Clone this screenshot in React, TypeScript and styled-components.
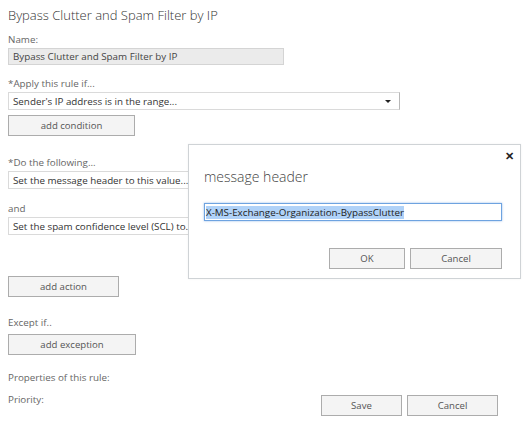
import styled, { createGlobalStyle } from 'styled-components';

const GlobalStyle = createGlobalStyle`
  body {
    margin: 0;
    background: #fff;
    font-family: "Open Sans", "Noto Sans", sans-serif;
    color: #444;
  }
`;

const Page = styled.div`
  position: relative;
  width: 527px;
  height: 434px;
  box-sizing: border-box;
  padding: 5px 8px;
  display: flex;
  flex-direction: column;
  overflow: hidden;
`;

const Title = styled.h1`
  margin: 0;
  height: 20px;
  line-height: 20px;
  font-size: 13px;
  font-weight: 300;
  color: #333;
`;

const Label = styled.div<{ $top: number }>`
  margin-top: ${p => p.$top}px;
  height: 12px;
  line-height: 12px;
  font-size: 9.8px;
  color: #666;
  white-space: nowrap;
`;

const NameBox = styled.div`
  margin-top: 2px;
  width: 276px;
  height: 17px;
  box-sizing: border-box;
  border: 1px solid #d4d4d4;
  background: #ebebeb;
  padding-left: 4px;
  font-size: 9.8px;
  line-height: 15px;
  color: #444;
`;

const Select = styled.div<{ $top: number; $width: number }>`
  margin-top: ${p => p.$top}px;
  width: ${p => p.$width}px;
  height: 18px;
  box-sizing: border-box;
  border: 1px solid #dadada;
  border-right-color: #b8b8b8;
  background: #fff;
  padding: 0 8px 0 4px;
  display: flex;
  align-items: center;
  justify-content: space-between;
  font-size: 9.8px;
  color: #333;
  white-space: nowrap;
  overflow: hidden;
`;

const Caret = styled.span`
  width: 0;
  height: 0;
  border-left: 3px solid transparent;
  border-right: 3px solid transparent;
  border-top: 3px solid #222;
`;

const Button = styled.div<{ $top?: number; $width: number }>`
  margin-top: ${p => p.$top ?? 0}px;
  width: ${p => p.$width}px;
  height: 21px;
  box-sizing: border-box;
  border: 1px solid #acacac;
  background: #f4f4f4;
  display: flex;
  align-items: center;
  justify-content: center;
  font-size: 9.6px;
  color: #555;
`;

const BottomRow = styled.div<{ $end?: boolean }>`
  display: flex;
  justify-content: ${p => (p.$end ? 'flex-end' : 'space-between')};
  align-items: flex-start;
`;

const ButtonGroup = styled.div<{ $top: number; $right: number }>`
  display: flex;
  gap: 5px;
  margin-top: ${p => p.$top}px;
  margin-right: ${p => p.$right}px;
`;

const Dialog = styled.div`
  position: absolute;
  left: 188px;
  top: 144px;
  width: 333px;
  height: 135px;
  box-sizing: border-box;
  border: 1px solid #cfd3d6;
  background: #fff;
  padding: 0 18px 0 15px;
  display: flex;
  flex-direction: column;
  box-shadow: 0 0 2px rgba(0, 0, 0, 0.06);
`;

const Close = styled.div`
  position: absolute;
  top: 6px;
  right: 6px;
  font-size: 11px;
  font-weight: 700;
  color: #222;
  line-height: 10px;
`;

const DialogTitle = styled.div`
  margin-top: 23px;
  height: 18px;
  line-height: 18px;
  font-size: 14px;
  font-weight: 300;
  color: #444;
`;

const FocusInput = styled.div`
  margin-top: 17px;
  height: 18px;
  box-sizing: border-box;
  border: 1px solid #6ea3e0;
  box-shadow: 0 0 2px rgba(80, 140, 220, 0.6);
  padding-left: 1px;
  display: flex;
  align-items: center;
  font-size: 9.8px;
  color: #222;
  white-space: nowrap;
`;

const Selected = styled.span`
  background: #b0d2f8;
  line-height: 13px;
`;

export default function App() {
  return (
    <>
      <GlobalStyle />
      <Page>
        <Title>Bypass Clutter and Spam Filter by IP</Title>
        <Label $top={9}>Name:</Label>
        <NameBox>Bypass Clutter and Spam Filter by IP</NameBox>
        <Label $top={13}>*Apply this rule if...</Label>
        <Select $top={2} $width={392}>
          Sender's IP address is in the range...
          <Caret />
        </Select>
        <Button $top={5} $width={127}>add condition</Button>
        <Label $top={21}>*Do the following...</Label>
        <Select $top={2} $width={260}>Set the message header to this value...</Select>
        <Label $top={14}>and</Label>
        <Select $top={2} $width={260}>Set the spam confidence level (SCL) to...</Select>
        <Button $top={41} $width={111}>add action</Button>
        <Label $top={20}>Except if..</Label>
        <Button $top={5} $width={128}>add exception</Button>
        <Label $top={17}>Properties of this rule:</Label>
        <BottomRow>
          <Label $top={10}>Priority:</Label>
          <ButtonGroup $top={11} $right={21}>
            <Button $width={81}>Save</Button>
            <Button $width={91}>Cancel</Button>
          </ButtonGroup>
        </BottomRow>

        <Dialog>
          <Close>✕</Close>
          <DialogTitle>message header</DialogTitle>
          <FocusInput>
            <Selected>X-MS-Exchange-Organization-BypassClutter</Selected>
          </FocusInput>
          <BottomRow $end>
            <ButtonGroup $top={27} $right={0}>
              <Button $width={76}>OK</Button>
              <Button $width={92}>Cancel</Button>
            </ButtonGroup>
          </BottomRow>
        </Dialog>
      </Page>
    </>
  );
}
